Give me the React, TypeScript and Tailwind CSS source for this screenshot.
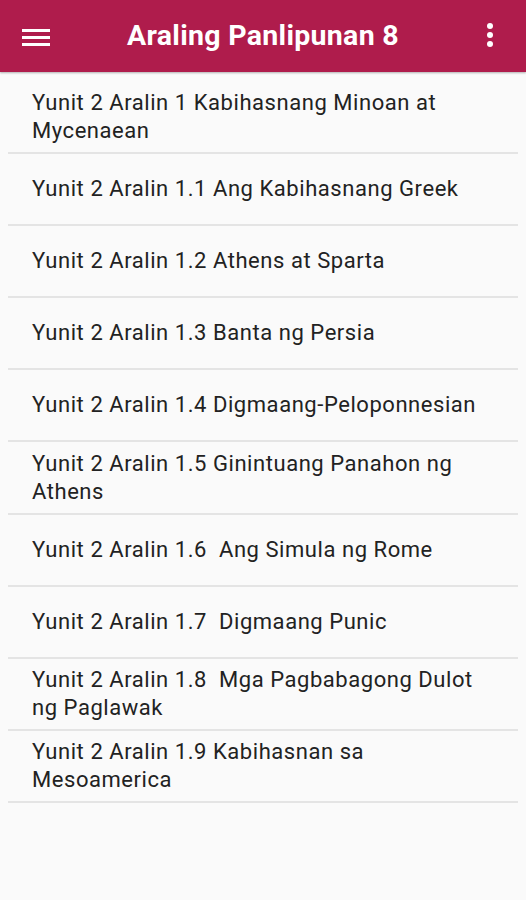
const lessons = [
  "Yunit 2 Aralin 1 Kabihasnang Minoan at Mycenaean",
  "Yunit 2 Aralin 1.1 Ang Kabihasnang Greek",
  "Yunit 2 Aralin 1.2 Athens at Sparta",
  "Yunit 2 Aralin 1.3 Banta ng Persia",
  "Yunit 2 Aralin 1.4 Digmaang-Peloponnesian",
  "Yunit 2 Aralin 1.5 Ginintuang Panahon ng Athens",
  "Yunit 2 Aralin 1.6\u00a0 Ang Simula ng Rome",
  "Yunit 2 Aralin 1.7\u00a0 Digmaang Punic",
  "Yunit 2 Aralin 1.8\u00a0 Mga Pagbabagong Dulot ng Paglawak",
  "Yunit 2 Aralin 1.9 Kabihasnan sa Mesoamerica",
];

const App = () => {
  return (
    <div className="min-h-[900px] bg-[#fafafa] font-['Roboto',sans-serif]">
      {/* top bar */}
      <header className="h-[72px] bg-[#af1c4c] flex items-center justify-between px-[22px] shadow-[0_1px_2px_rgba(0,0,0,0.3)]">
        <svg width="28" height="22" viewBox="0 0 28 22" className="text-white">
          <rect x="0" y="4" width="28" height="3" fill="currentColor" />
          <rect x="0" y="11" width="28" height="3" fill="currentColor" />
          <rect x="0" y="18" width="28" height="3" fill="currentColor" />
        </svg>
        <h1 className="text-white font-bold text-[28.5px] tracking-[0.3px]">Araling Panlipunan 8</h1>
        <svg width="28" height="28" viewBox="0 0 28 28" className="text-white mt-[-2px]">
          <circle cx="14" cy="5" r="3" fill="currentColor" />
          <circle cx="14" cy="14" r="3" fill="currentColor" />
          <circle cx="14" cy="23" r="3" fill="currentColor" />
        </svg>
      </header>

      {/* lesson list */}
      <ul className="pt-[9.5px] px-2">
        {lessons.map((title) => (
          <li
            key={title}
            className="h-[72.2px] flex items-center border-b-2 border-[#e4e4e4] pl-6 pr-[28px] text-[22px] leading-[28px] tracking-[0.55px] text-[#222222] cursor-pointer"
          >
            {title}
          </li>
        ))}
      </ul>
    </div>
  );
};

export default App;
